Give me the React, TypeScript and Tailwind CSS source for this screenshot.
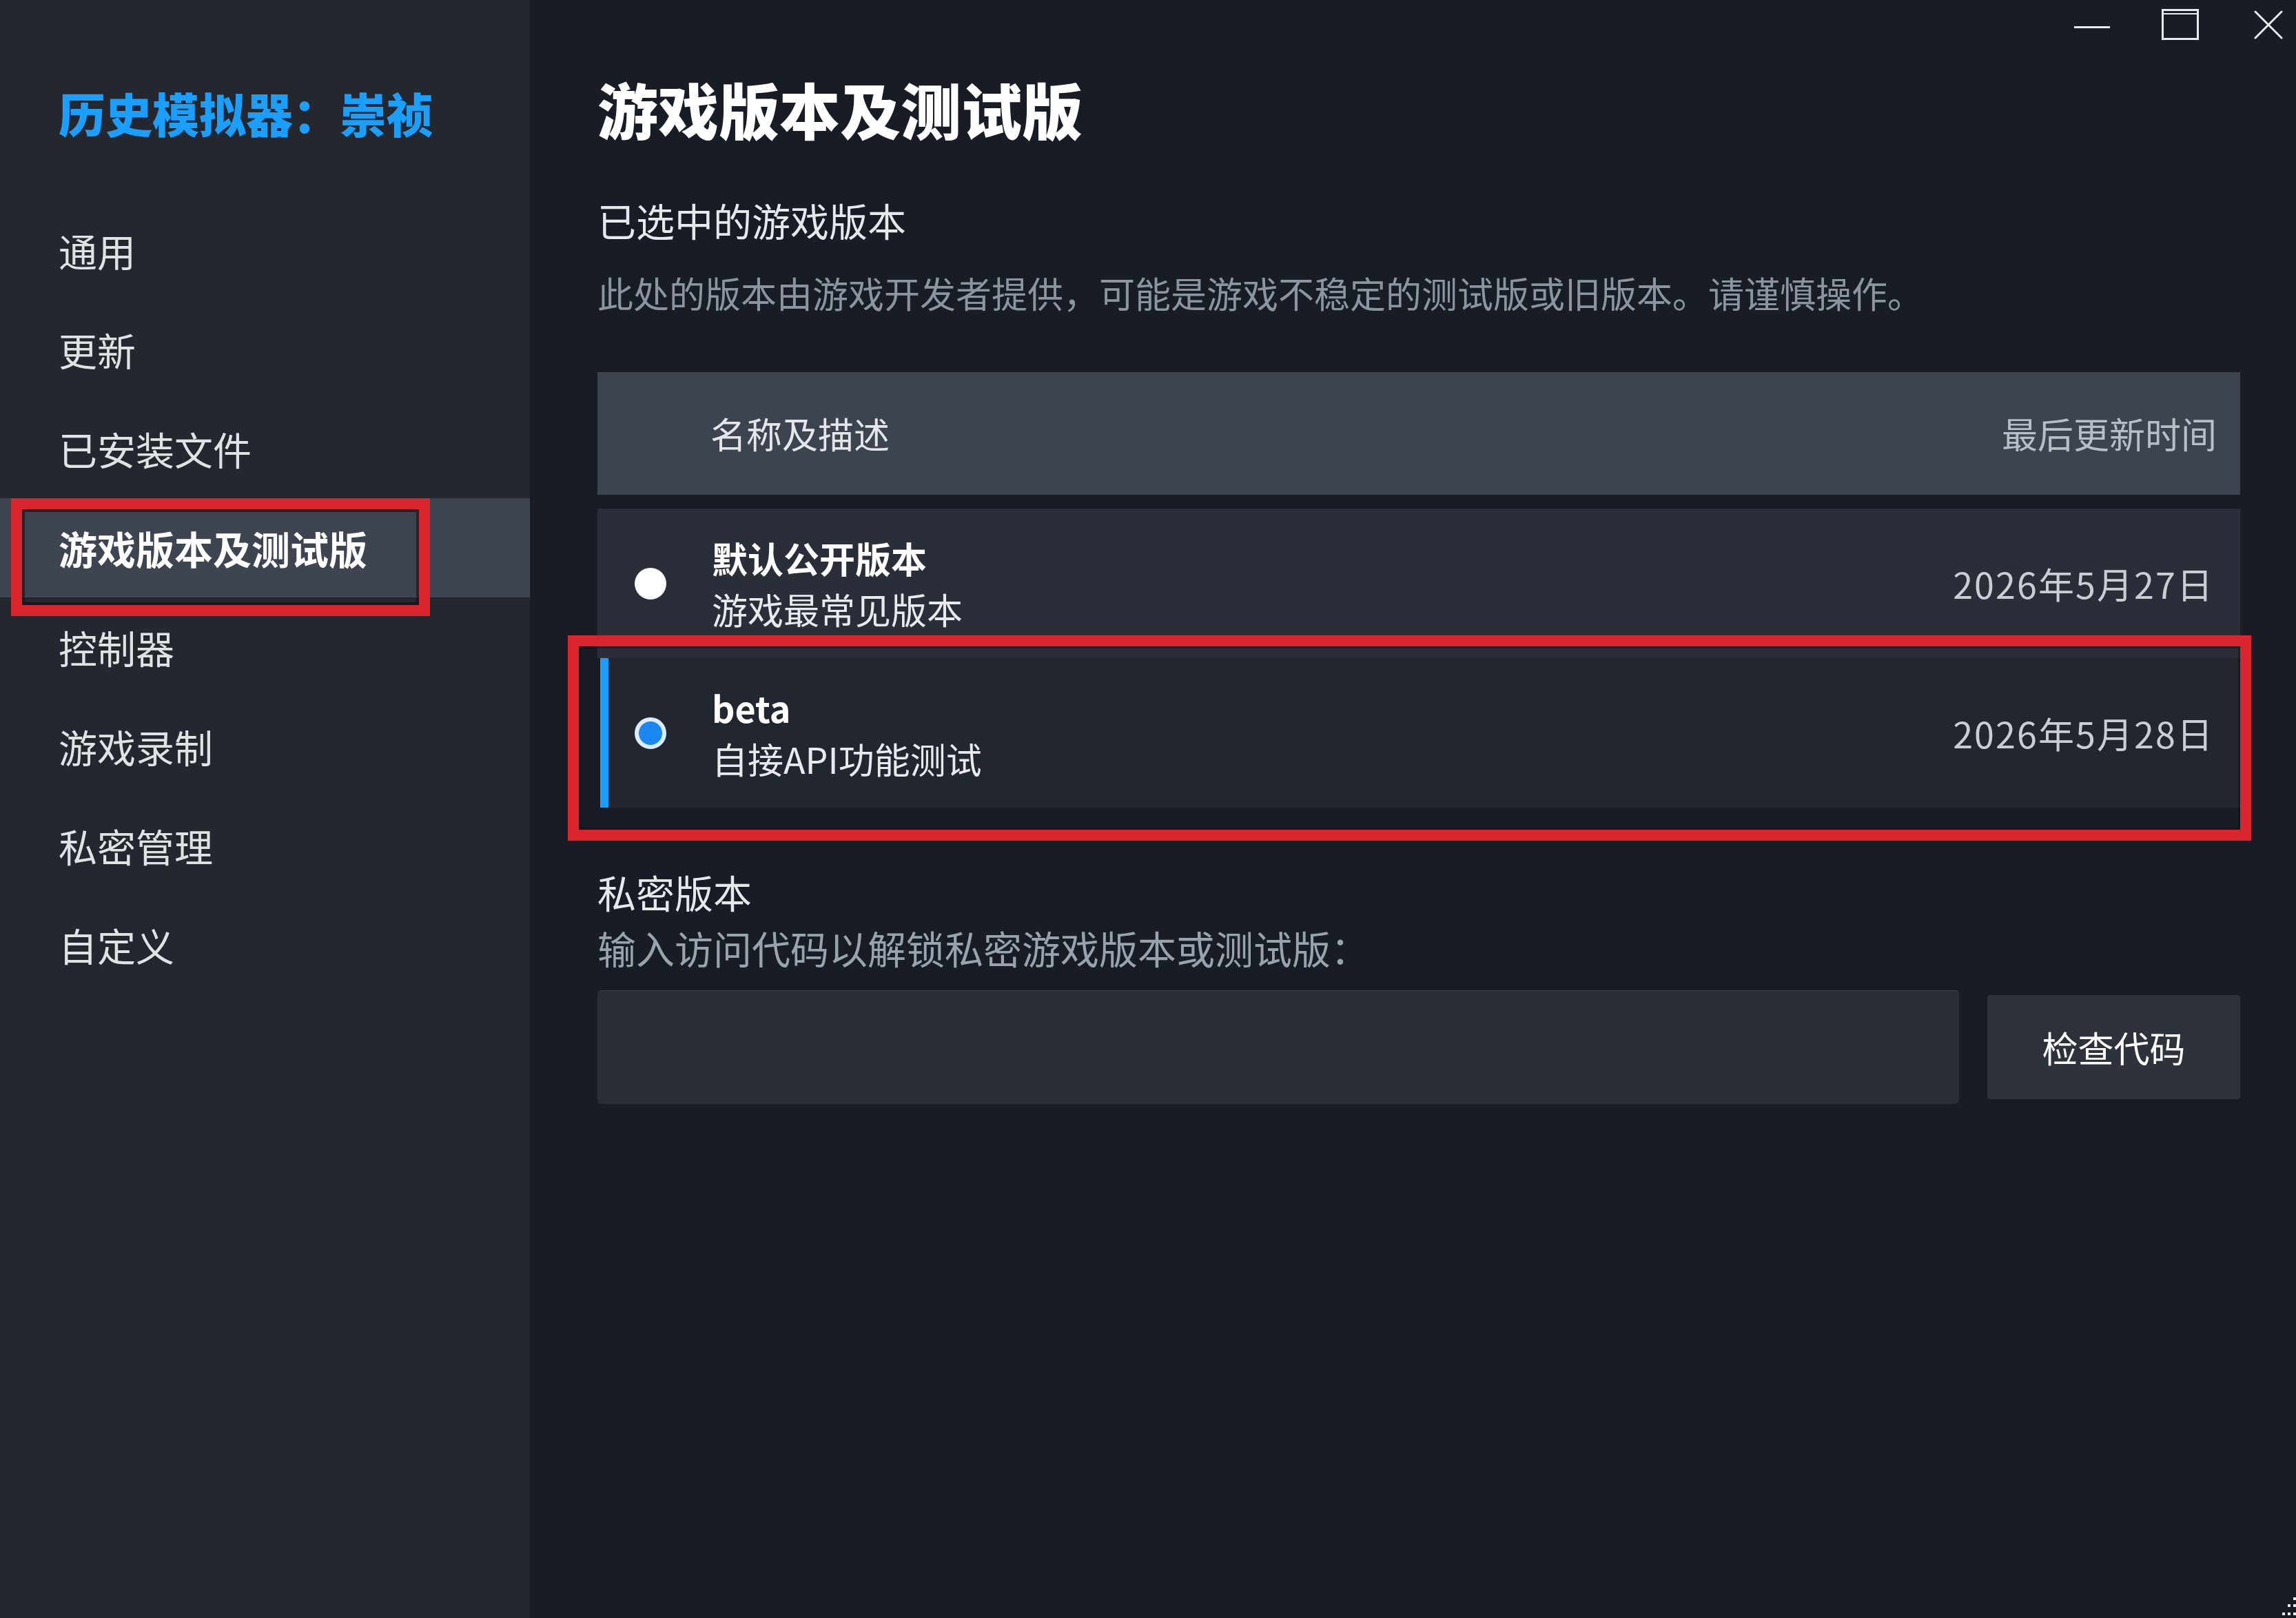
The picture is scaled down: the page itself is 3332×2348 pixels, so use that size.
const navItems = ['通用', '更新', '已安装文件', '游戏版本及测试版', '控制器', '游戏录制', '私密管理', '自定义'];
const activeNav = '游戏版本及测试版';

function Radio({ checked }: { checked: boolean }) {
  if (checked) {
    return <div className="h-[46px] w-[46px] shrink-0 rounded-full border-[6px] border-[#dcecff] bg-[#1a86f0]" />;
  }
  return <div className="h-[46px] w-[46px] shrink-0 rounded-full bg-white" />;
}

function BranchRow({ name, desc, date, selected }: { name: string; desc: string; date: string; selected?: boolean }) {
  return (
    <div
      className={
        selected
          ? 'ml-[4px] flex h-[217px] items-center border-l-[12px] border-[#1a9fff] bg-[#22262f] pl-[38px] pr-[38px]'
          : 'flex h-[218px] items-center border-t border-[#14181f] bg-[#2a2e38] pl-[54px] pr-[38px]'
      }
    >
      <Radio checked={!!selected} />
      <div className="ml-[66px] flex flex-col gap-[22px]">
        <div className="text-[52px] font-bold leading-[52px] text-white">{name}</div>
        <div className="text-[52px] leading-[52px] text-[#e8eaed]">{desc}</div>
      </div>
      <div className="ml-auto text-[52px] leading-[52px] tracking-[0.04em] text-[#c9ced4]">{date}</div>
    </div>
  );
}

export default function App() {
  return (
    <div className="relative flex h-[2348px] w-[3332px] overflow-hidden bg-[#171c25] font-[family-name:'Noto_Sans_CJK_SC','Noto_Sans',sans-serif] text-[#dfe3e6]">
      {/* Sidebar */}
      <aside className="flex w-[769px] shrink-0 flex-col bg-[#24272e]">
        <div className="h-[291px] pl-[85px] pt-[130px]">
          <h1 className="text-[68px] font-black leading-[68px] text-[#1a9fff]">历史模拟器：崇祯</h1>
        </div>
        <nav className="flex flex-col">
          {navItems.map((item) => (
            <div
              key={item}
              className={
                item === activeNav
                  ? 'flex h-[144px] items-center bg-[#3e4450] pl-[85px] text-[56px] font-bold leading-none text-white'
                  : 'flex h-[144px] items-center pl-[85px] text-[56px] leading-none text-[#dfe3e6]'
              }
            >
              {item}
            </div>
          ))}
        </nav>
      </aside>

      {/* Main */}
      <main className="flex flex-1 flex-col pl-[98px] pr-[81px]">
        <h2 className="mt-[113px] h-[88px] text-[88px] font-black leading-[88px] text-white">游戏版本及测试版</h2>
        <div className="mt-[90px] h-[56px] text-[56px] leading-[56px] text-[#e6e9ec]">已选中的游戏版本</div>
        <p className="mt-[52px] h-[52px] whitespace-nowrap text-[52px] leading-[52px] text-[#8c959f]">
          此处的版本由游戏开发者提供，可能是游戏不稳定的测试版或旧版本。请谨慎操作。
        </p>

        <div className="mt-[89px] flex h-[178px] items-center justify-between bg-[#3d434f] pl-[164px] pr-[34px] text-[52px] leading-[52px]">
          <span className="text-[#e4e7ea]">名称及描述</span>
          <span className="text-[#b8bec6]">最后更新时间</span>
        </div>

        <div className="mt-[19px] flex flex-col">
          <BranchRow name="默认公开版本" desc="游戏最常见版本" date="2026年5月27日" />
          <BranchRow name="beta" desc="自接API功能测试" date="2026年5月28日" selected />
        </div>

        <div className="mt-[94px] h-[56px] text-[56px] leading-[56px] text-[#e6e9ec]">私密版本</div>
        <div className="mt-[25px] h-[56px] text-[56px] leading-[56px] text-[#9aa3ad]">输入访问代码以解锁私密游戏版本或测试版：</div>

        <div className="mt-[34px] flex items-center gap-[41px]">
          <div className="h-[165px] flex-1 rounded-[6px] border-t border-[#3a4049] bg-[#2a2f37]" />
          <button className="h-[151px] w-[367px] rounded-[4px] bg-[#2d323b] text-[52px] text-white">检查代码</button>
        </div>
      </main>

      {/* Window controls */}
      <div className="absolute right-0 top-0 flex items-start gap-[75px] pr-[19px]">
        <div className="mt-[38px] h-[3px] w-[52px] bg-[#e8eaed]" />
        <div className="mt-[13px] h-[45px] w-[54px] border-[3px] border-[#e8eaed]">
          <div className="mt-[3px] h-[2px] w-full bg-[#e8eaed]" />
        </div>
        <svg className="ml-[5px] mt-[15px]" width="42" height="42" viewBox="0 0 42 42" fill="none" stroke="#e8eaed" strokeWidth="3" strokeLinecap="round">
          <path d="M2 2 L40 40 M40 2 L2 40" />
        </svg>
      </div>

      {/* Resize grip */}
      <svg className="absolute bottom-0 right-0" width="30" height="40" viewBox="0 0 30 40" fill="#e8eaed">
        <rect x="26" y="10" width="4" height="4" />
        <rect x="18" y="20" width="4" height="4" />
        <rect x="26" y="20" width="4" height="4" />
        <rect x="10" y="32" width="4" height="4" />
        <rect x="18" y="32" width="4" height="4" />
        <rect x="26" y="32" width="4" height="4" />
      </svg>

      {/* Red annotation boxes */}
      <div className="pointer-events-none absolute left-[16px] top-[723px] h-[171px] w-[608px] border-[16px] border-[#d9252b] shadow-[inset_0_0_0_4px_rgba(10,12,16,0.55)]" />
      <div className="pointer-events-none absolute left-[824px] top-[922px] h-[298px] w-[2443px] border-[16px] border-[#d9252b] shadow-[inset_0_0_0_3px_rgba(10,12,16,0.4)]" />
    </div>
  );
}
